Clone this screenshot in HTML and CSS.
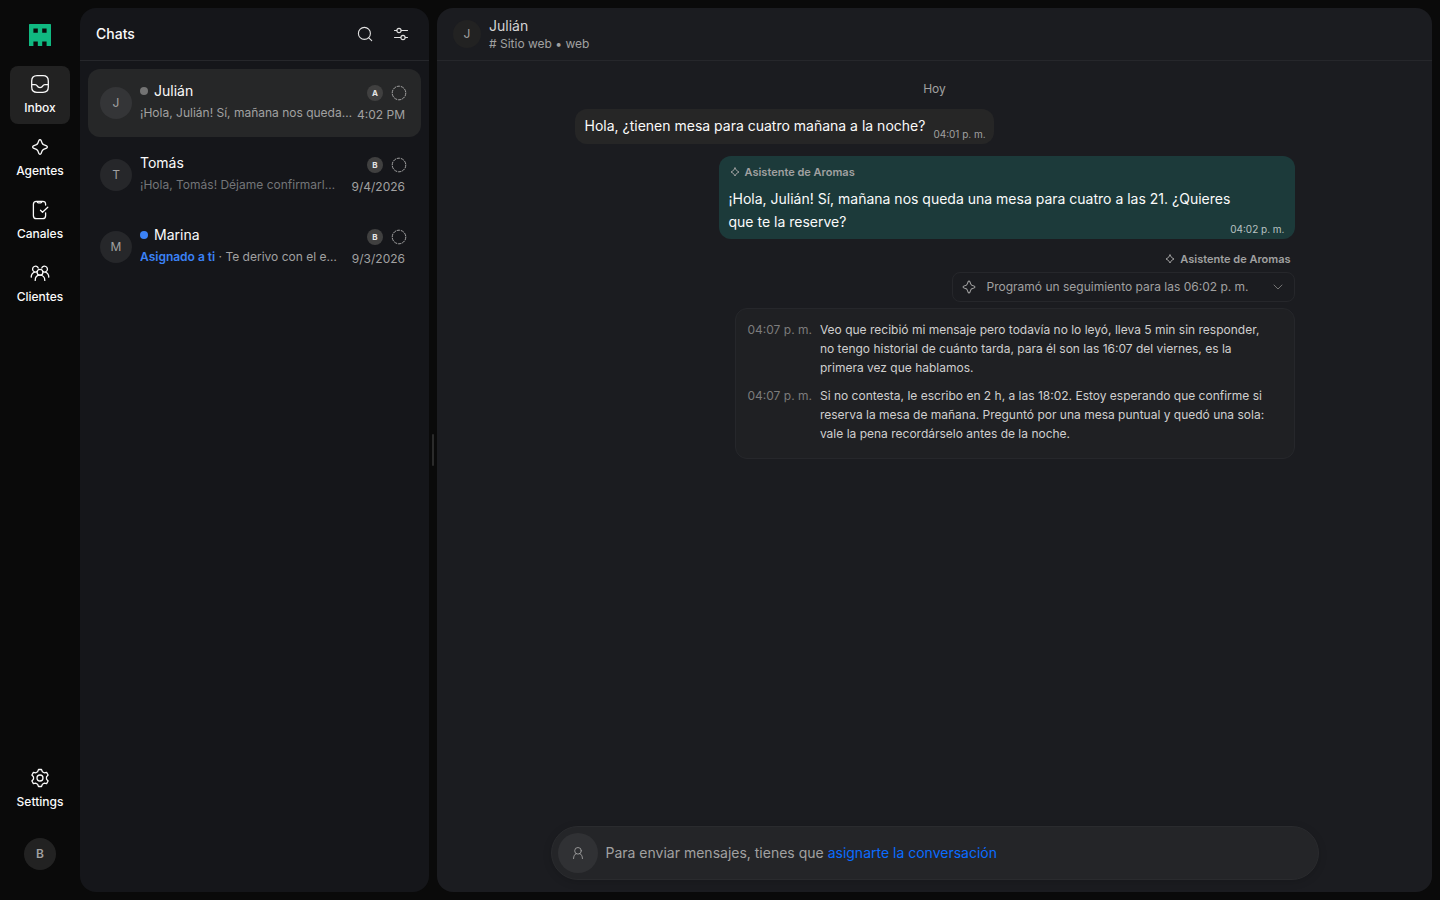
FILE: index.html
```html
<!DOCTYPE html>
<html lang="es">
<head>
<meta charset="utf-8">
<meta name="viewport" content="width=device-width, initial-scale=1">
<title>Chats</title>
<link rel="stylesheet" href="styles.css">
</head>
<body>
<svg class="defs" width="0" height="0" aria-hidden="true">
  <symbol id="spark" viewBox="0 0 20 20"><path d="M10 2.600c.5 0 .9.3 1.100.8l1.200 3c.3.6.7 1 1.300 1.300l3 1.200c1 .4 1 1.800 0 2.200l-3 1.200c-.6.3-1 .7-1.300 1.300l-1.200 3c-.4 1-1.800 1-2.200 0l-1.200-3c-.3-.6-.7-1-1.300-1.300l-3-1.200c-1-.4-1-1.800 0-2.200l3-1.200c.6-.3 1-.7 1.300-1.300l1.200-3c.2-.5.6-.8 1.100-.8z"/></symbol>
  <symbol id="spark-small" viewBox="0 0 12 12"><path d="M6 2Q7 5 10 6 7 7 6 10 5 7 2 6 5 5 6 2z"/></symbol>
  <symbol id="unassigned" viewBox="0 0 16 16"><circle cx="8" cy="8" r="6.800" stroke-dasharray="2.700 1.570"/></symbol>
</svg>
<div class="app">
  <nav class="rail" aria-label="Principal">
    <svg class="logo" viewBox="0 0 5 5" aria-label="Logo"><path fill-rule="evenodd" d="M.15 0h4.700q.15 0 .15.150V5H4V4H3v1H2V4H1v1H0V.15Q0 0 .15 0zM1 1v1h1V1zM3 1v1h1V1z"/></svg>
    <a class="rail-item active" href="#inbox">
      <svg class="icon" viewBox="0 0 20 20"><path d="M7 1.700h6q5.300 0 5.300 5.300v6q0 5.300-5.300 5.300H7q-5.300 0-5.300-5.300V7q0-5.300 5.300-5.300zM1.900 10.700h3.300c1 0 1.600.5 2 1.200.6 1.200 1.500 1.800 2.800 1.800s2.200-.6 2.800-1.800c.4-.7 1-1.200 2-1.200h3.300"/></svg>
      <span>Inbox</span>
    </a>
    <a class="rail-item" href="#agentes">
      <svg class="icon"><use href="#spark"/></svg>
      <span>Agentes</span>
    </a>
    <a class="rail-item" href="#canales">
      <svg class="icon" viewBox="0 0 20 20"><path d="M15.600 5V4.300c0-2-1-3-3-3H6.400c-2 0-3 1-3 3v11.400c0 2 1 3 3 3h6.200c2 0 3-1 3-3v-2.900M7 1.500c.2 1 .6 1.300 1.400 1.300h2.200c.8 0 1.200-.3 1.400-1.300M10.500 10.200l2 2 5.300-4.900"/></svg>
      <span>Canales</span>
    </a>
    <a class="rail-item" href="#clientes">
      <svg class="icon" viewBox="0 0 20 20"><circle cx="10" cy="9.200" r="2.900"/><path d="M5.200 17.400c0-3.200 1.900-5.200 4.800-5.200s4.800 2 4.800 5.200M7 8.600A2.900 2.900 0 1 1 8.200 5.100M13 8.600a2.900 2.900 0 1 0-1.200-3.500M4.800 9.200c-2.100.6-3.500 2.400-3.600 4.900M15.200 9.200c2.100.6 3.500 2.400 3.600 4.900"/></svg>
      <span>Clientes</span>
    </a>
    <a class="rail-item bottom" href="#settings">
      <svg class="icon" viewBox="0 0 20 20"><circle cx="10" cy="10" r="3"/><path d="M8.500 1.500h3l.9 2.300 1.700 1 2.500-.4 1.500 2.600-1.600 1.900v2.200l1.600 1.900-1.500 2.600-2.500-.4-1.700 1-.9 2.300h-3l-.9-2.300-1.700-1-2.500.4-1.500-2.600 1.600-1.900V8.900L1.900 7l1.500-2.600 2.500.4 1.700-1z"/></svg>
      <span>Settings</span>
    </a>
    <button class="avatar user" type="button" aria-label="Cuenta">B</button>
  </nav>

  <section class="panel list">
    <header class="bar list-bar">
      <h1>Chats</h1>
      <button class="tool" type="button" aria-label="Buscar"><svg viewBox="0 0 16 16"><circle cx="7.400" cy="7.400" r="6"/><path d="M11.800 11.800l2.900 2.900"/></svg></button>
      <button class="tool" type="button" aria-label="Filtros"><svg viewBox="0 0 16 16"><path d="M1.500 4.500h2.200M8.300 4.500h6.200M1.500 11.500h6.200M12.300 11.500h2.200"/><circle cx="6" cy="4.500" r="2.100"/><circle cx="10" cy="11.500" r="2.100"/></svg></button>
    </header>
    <div class="rows">
      <a class="row selected" href="#julian">
        <span class="avatar">J</span>
        <span class="row-main">
          <span class="name"><i class="dot"></i>Julián</span>
          <span class="preview">¡Hola, Julián! Sí, mañana nos queda…</span>
        </span>
        <span class="row-side">
          <span class="marks"><b class="badge">A</b><svg class="mark"><use href="#unassigned"/></svg></span>
          <time>4:02 PM</time>
        </span>
      </a>
      <a class="row read" href="#tomas">
        <span class="avatar">T</span>
        <span class="row-main">
          <span class="name">Tomás</span>
          <span class="preview">¡Hola, Tomás! Déjame confirmarl…</span>
        </span>
        <span class="row-side">
          <span class="marks"><b class="badge">B</b><svg class="mark"><use href="#unassigned"/></svg></span>
          <time>9/4/2026</time>
        </span>
      </a>
      <a class="row" href="#marina">
        <span class="avatar">M</span>
        <span class="row-main">
          <span class="name"><i class="dot unread"></i>Marina</span>
          <span class="preview"><strong>Asignado a ti</strong> · Te derivo con el e…</span>
        </span>
        <span class="row-side">
          <span class="marks"><b class="badge">B</b><svg class="mark"><use href="#unassigned"/></svg></span>
          <time>9/3/2026</time>
        </span>
      </a>
    </div>
  </section>

  <div class="splitter" role="separator"><i></i></div>

  <main class="panel chat">
    <header class="bar chat-bar">
      <span class="avatar small">J</span>
      <div class="who"><h2>Julián</h2><p># Sitio web • web</p></div>
    </header>
    <div class="thread">
      <p class="day">Hoy</p>
      <div class="bubble in">
        <p>Hola, ¿tienen mesa para cuatro mañana a la noche?</p>
        <time>04:01 p. m.</time>
      </div>
      <div class="bubble out">
        <div class="author"><svg><use href="#spark-small"/></svg>Asistente de Aromas</div>
        <p>¡Hola, Julián! Sí, mañana nos queda una mesa para cuatro a las 21. ¿Quieres que te la reserve?</p>
        <time>04:02 p. m.</time>
      </div>
      <div class="author loose"><svg><use href="#spark-small"/></svg>Asistente de Aromas</div>
      <button class="event" type="button">
        <svg class="event-icon"><use href="#spark"/></svg>
        <span>Programó un seguimiento para las 06:02 p. m.</span>
        <svg class="chev" viewBox="0 0 12 12"><path d="M2 4l4 4 4-4"/></svg>
      </button>
      <div class="notes">
        <time>04:07 p. m.</time>
        <p>Veo que recibió mi mensaje pero todavía no lo leyó, lleva 5 min sin responder, no tengo historial de cuánto tarda, para él son las 16:07 del viernes, es la primera vez que hablamos.</p>
        <time>04:07 p. m.</time>
        <p>Si no contesta, le escribo en 2 h, a las 18:02. Estoy esperando que confirme si reserva la mesa de mañana. Preguntó por una mesa puntual y quedó una sola: vale la pena recordárselo antes de la noche.</p>
      </div>
    </div>
    <footer class="composer">
      <span class="person"><svg viewBox="0 0 16 16"><circle cx="8" cy="5.500" r="3.800"/><path d="M2.900 14.400c0-3.200 1.500-5.300 3.400-5.800M13.100 14.400c0-3.200-1.500-5.300-3.400-5.800"/></svg></span>
      <p>Para enviar mensajes, tienes que <a href="#asignar">asignarte la conversación</a></p>
    </footer>
  </main>
</div>
</body>
</html>
```
FILE: styles.css
```css
* { box-sizing: border-box; }
body {
  margin: 0;
  background: #0a0a0a;
  color: #fafafa;
  font: 14px/20px Inter, "Liberation Sans", sans-serif;
}
h1, h2, p { margin: 0; font-size: 14px; font-weight: 400; }
a { color: inherit; text-decoration: none; }
button { font: inherit; color: inherit; border: 0; padding: 0; background: none; cursor: pointer; }
svg { fill: none; stroke: currentColor; stroke-width: 1; stroke-linecap: round; stroke-linejoin: round; flex: none; }
.defs { position: absolute; }

.app { display: flex; height: 100vh; padding: 8px 8px 8px 0; }

.rail {
  width: 80px;
  flex: none;
  display: flex;
  flex-direction: column;
  align-items: center;
  gap: 5px;
  padding: 16px 10px 22px;
}
.logo { width: 22px; height: 22px; margin-bottom: 15px; fill: #10b981; stroke: none; }
.rail-item {
  width: 60px;
  height: 58px;
  display: flex;
  flex-direction: column;
  align-items: center;
  gap: 6px;
  padding-top: 8px;
  border-radius: 8px;
  font-size: 12px;
  font-weight: 500;
  line-height: 16px;
}
.rail-item.active { background: #222222; }
.rail-item.bottom { margin-top: auto; margin-bottom: 15px; }
.icon { width: 20px; height: 20px; stroke-width: 1.3; }

.avatar {
  width: 32px;
  height: 32px;
  flex: none;
  display: flex;
  align-items: center;
  justify-content: center;
  border-radius: 50%;
  background: #26272a;
  color: #a1a1a1;
  font-size: 12px;
}
.avatar.user { background: #222222; font-weight: 600; }
.avatar.small { width: 28px; height: 28px; background: #222222; }

.panel { border-radius: 16px; display: flex; flex-direction: column; overflow: hidden; }
.list { width: 349px; flex: none; background: #15161a; }
.chat { flex: 1; min-width: 0; background: #1b1c20; }
.bar { height: 53px; flex: none; display: flex; align-items: center; border-bottom: 1px solid #26272b; }
.list-bar { padding: 0 16px; gap: 12px; }
.list-bar h1 { flex: 1; font-weight: 500; }
.tool { width: 24px; height: 24px; display: grid; place-items: center; color: #e0e0e0; }
.tool svg { width: 16px; height: 16px; stroke-width: 1.1; }

.rows { display: flex; flex-direction: column; gap: 4px; padding: 8px; }
.row { height: 68px; display: flex; align-items: center; gap: 8px; padding: 0 14px 0 12px; border-radius: 12px; }
.row.selected { background: #262728; }
.row.selected .avatar { background: #343537; }
.row-main { flex: 1; min-width: 0; display: flex; flex-direction: column; gap: 2px; padding-bottom: 2px; }
.name { display: flex; align-items: center; gap: 6px; }
.dot { width: 8px; height: 8px; border-radius: 50%; background: #737373; }
.dot.unread { background: #3b82f6; }
.preview { margin-right: -6px; overflow: hidden; white-space: nowrap; text-overflow: ellipsis; color: #a1a1a1; font-size: 12px; }
.preview strong { color: #3b82f6; font-weight: 600; }
.row.read .preview { color: #737578; }
.row-side { display: flex; flex-direction: column; align-items: flex-end; gap: 4px; padding-top: 3px; color: #a1a1a1; font-size: 12px; }
.row-side time { padding-right: 2px; }
.marks { display: flex; gap: 8px; align-items: center; }
.badge { width: 16px; height: 16px; display: grid; place-items: center; border-radius: 50%; background: #404040; color: #e5e5e5; font-size: 8px; line-height: 8px; }
.mark { width: 16px; height: 16px; }

.splitter { width: 8px; flex: none; display: grid; place-items: center; }
.splitter i { width: 2px; height: 32px; border-radius: 1px; background: #2b2b2b; }

.chat-bar { padding: 0 16px; gap: 8px; }
.who { padding-top: 2px; }
.who h2 { line-height: 18px; color: #d4d4d4; }
.who p { font-size: 12px; line-height: 18px; color: #a1a1a1; }

.thread {
  flex: 1;
  width: 100%;
  max-width: 720px;
  margin: 0 auto;
  padding-top: 18px;
  display: flex;
  flex-direction: column;
  align-items: flex-end;
}
.day { align-self: center; margin-bottom: 10px; color: #a1a1a1; font-size: 12px; }
.bubble { border-radius: 12px; }
.bubble p { line-height: 23px; }
.bubble time { font-size: 10px; line-height: 14px; }
.bubble.in { align-self: flex-start; display: flex; align-items: flex-end; gap: 8px; padding: 5px 8px 7px 10px; background: #262626; }
.bubble.in time { margin-bottom: -4px; color: #a1a1a1; }
.bubble.out {
  width: 80%;
  display: flex;
  flex-direction: column;
  margin: 12px 0 10px;
  padding: 6px 10px 3px;
  background: #1c3a3a;
}
.bubble.out p { margin-top: 5px; padding-right: 40px; }
.bubble.out time { align-self: flex-end; margin-top: -11px; color: #b8c2c2; }
.author { display: flex; align-items: center; gap: 4px; color: #a1a1a1; font-size: 11px; font-weight: 600; }
.author svg { width: 12px; height: 12px; }
.author.loose { padding-right: 4px; }
.event {
  height: 30px;
  min-width: 343px;
  display: flex;
  align-items: center;
  margin: 3px 0 6px;
  padding: 0 10px 0 8px;
  border: 1px solid #26272b;
  border-radius: 8px;
  color: #a1a1a1;
  font-size: 12px;
  text-align: left;
}
.event span { flex: 1; }
.event-icon { width: 16px; height: 16px; margin-right: 10px; stroke-width: 1.3; }
.chev { width: 12px; height: 12px; margin-left: 10px; color: #737373; }
.notes {
  width: 560px;
  display: grid;
  grid-template-columns: max-content 1fr;
  gap: 9px 8px;
  padding: 11px 20px 15px 12px;
  border: 1px solid #26272b;
  border-radius: 12px;
  background: #1f2023;
  color: #cfcfcf;
  font-size: 12px;
  line-height: 19px;
}
.notes p { font-size: 12px; }
.notes time { color: #7c7c7c; }

.composer {
  width: calc(100% - 32px);
  max-width: 768px;
  margin: 0 auto 12px;
  display: flex;
  align-items: center;
  gap: 8px;
  padding: 6px;
  border: 1px solid #2a2b2e;
  border-radius: 27px;
  background: #242528;
  color: #a1a1a1;
  box-shadow: 0 2px 8px rgba(0, 0, 0, .15);
}
.composer a { color: #0a6cff; }
.person { width: 40px; height: 40px; display: grid; place-items: center; border-radius: 50%; background: #303134; }
.person svg { width: 14px; height: 14px; }
```
